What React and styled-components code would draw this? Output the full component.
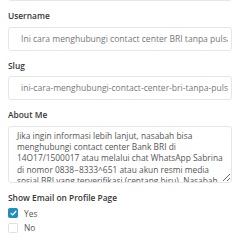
import React from "react";
import styled, { createGlobalStyle } from "styled-components";

const Global = createGlobalStyle`
  html, body { margin: 0; padding: 0; background: #fff; }
  body { font-family: "Open Sans", "Liberation Sans", sans-serif; overflow: hidden; }
  * { box-sizing: border-box; }
`;

const Page = styled.div`
  width: 240px;
  height: 240px;
  overflow: hidden;
  padding: 0 8px;
`;

const Form = styled.div`
  display: flex;
  flex-direction: column;
  gap: 9px;
  margin-top: -23px;
`;

const Group = styled.div`
  display: flex;
  flex-direction: column;
  gap: 4px;
`;

const Label = styled.div`
  font-size: 8.4px;
  line-height: 12.6px;
  font-weight: 600;
  color: #383838;
`;

const Input = styled.div`
  height: 24px;
  border: 1px solid #e6e6e6;
  border-radius: 3px;
  padding: 0 3px 0 12px;
  display: flex;
  align-items: center;
  font-size: 8.55px;
  color: #777;
`;

const InputText = styled.span`
  flex: 1;
  min-width: 0;
  white-space: nowrap;
  overflow: hidden;
`;

const TextArea = styled.textarea`
  height: 57px;
  border: 1px solid #e6e6e6;
  border-radius: 3px;
  padding: 3px 8px 6px 8px;
  font-family: "Open Sans", "Liberation Sans", sans-serif;
  font-size: 8.4px;
  line-height: 11.3px;
  color: #555;
  resize: vertical;
  overflow: hidden;
  outline: none;
  width: 100%;
  display: block;
`;

const Options = styled.div`
  display: flex;
  flex-direction: column;
  gap: 4.5px;
`;

const Option = styled.label`
  display: flex;
  align-items: center;
  gap: 6px;
  font-size: 8.4px;
  color: #555;
  height: 10px;
`;

const Box = styled.span`
  width: 10px;
  height: 10px;
  border-radius: 1.5px;
  display: flex;
  align-items: center;
  justify-content: center;
  background: ${(p) => (p.$checked ? "#1f8fbf" : "#fff")};
  border: 1px solid ${(p) => (p.$checked ? "#1f8fbf" : "#e0e0e0")};
`;

const about =
  "Jika ingin informasi lebih lanjut, nasabah bisa menghubungi contact center Bank BRI di 14O17/1500017 atau melalui chat WhatsApp Sabrina di nomor 0838−8333^651 atau akun resmi media sosial BRI yang terverifikasi (centang biru). Nasabah juga dapat datang langsung ke kantor cabang terdekat.";

export default function App() {
  return (
    <Page>
      <Global />
      <Form>
        <Input />
        <Group>
          <Label>Username</Label>
          <Input>
            <InputText>Ini cara menghubungi contact center BRI tanpa pulsa</InputText>
          </Input>
        </Group>
        <Group>
          <Label>Slug</Label>
          <Input>
            <InputText>ini-cara-menghubungi-contact-center-bri-tanpa-pulsa</InputText>
          </Input>
        </Group>
        <Group>
          <Label>About Me</Label>
          <TextArea readOnly value={about} />
        </Group>
        <Group>
          <Label>Show Email on Profile Page</Label>
          <Options>
            <Option>
              <Box $checked>
                <svg width="7" height="6" viewBox="0 0 7 6">
                  <path d="M0.8 3.1 L2.7 4.9 L6.2 1" fill="none" stroke="#fff" strokeWidth="1.3" />
                </svg>
              </Box>
              Yes
            </Option>
            <Option>
              <Box />
              No
            </Option>
          </Options>
        </Group>
      </Form>
    </Page>
  );
}
